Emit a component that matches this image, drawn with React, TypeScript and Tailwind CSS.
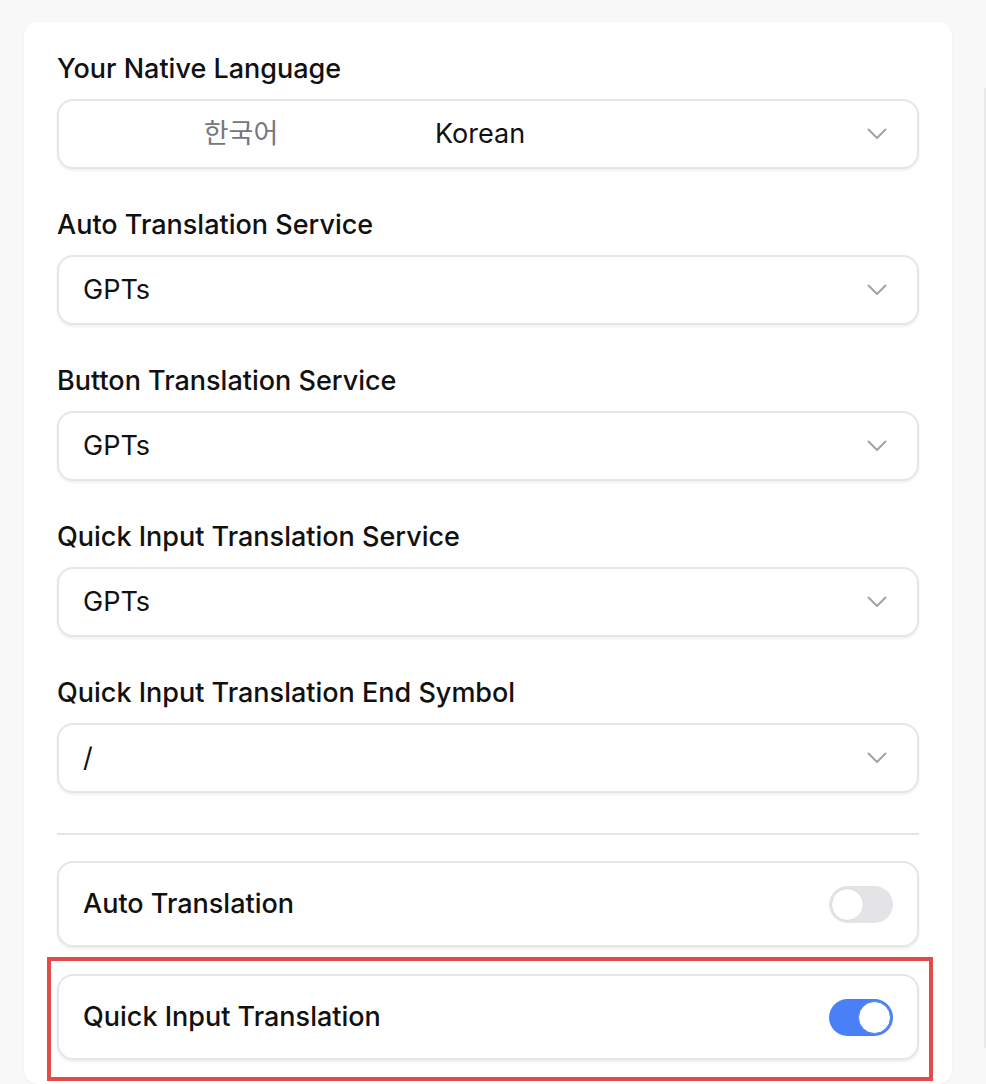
import { useState } from "react";

const font = { fontFamily: "Inter, 'Noto Sans CJK KR', 'Liberation Sans', sans-serif" };

function Chevron() {
    return (
        <svg width="20" height="12" viewBox="0 0 20 12" fill="none" className="shrink-0">
            <polyline points="1.5,1.5 10,10 18.5,1.5" stroke="#a3a3a8" strokeWidth="2" strokeLinecap="round" strokeLinejoin="round" />
        </svg>
    );
}

function SelectBox({ children }: { children: React.ReactNode }) {
    return (
        <div className="flex items-center h-[70px] rounded-[16px] border-2 border-[#e6e6e6] bg-white shadow-[0_2px_3px_rgba(0,0,0,0.06)] pl-[24px] pr-[30px]">
            <div className="flex-1 flex items-center text-[27px] text-[#111]">{children}</div>
            <Chevron />
        </div>
    );
}

function Field({ label, children, first }: { label: string; children: React.ReactNode; first?: boolean }) {
    return (
        <div className={first ? "" : "mt-[40px]"}>
            <div className="text-[27px] leading-[32px] font-medium text-[#111] mb-[14px]">{label}</div>
            <SelectBox>{children}</SelectBox>
        </div>
    );
}

function Toggle({ on, onChange }: { on: boolean; onChange: () => void }) {
    return (
        <button
            onClick={onChange}
            className={
                "relative w-[64px] h-[37px] rounded-full transition-colors " +
                (on ? "bg-[#4a80f7]" : "bg-[#e4e4e7]")
            }
        >
            <span
                className={
                    "absolute top-[2px] w-[33px] h-[33px] rounded-full bg-white transition-all " +
                    (on ? "left-[29px] border border-[#4a80f7]" : "left-[2px] border border-[#d9d9dc]")
                }
            />
        </button>
    );
}

function ToggleCard({ label, on, onChange }: { label: string; on: boolean; onChange: () => void }) {
    return (
        <div className="flex items-center justify-between h-[86px] rounded-[16px] border-2 border-[#e6e6e6] bg-white shadow-[0_2px_3px_rgba(0,0,0,0.07)] pl-[24px] pr-[24px]">
            <span className="text-[27px] font-medium text-[#111]">{label}</span>
            <Toggle on={on} onChange={onChange} />
        </div>
    );
}

export default function App() {
    const [auto, setAuto] = useState(false)
    const [quick, setQuick] = useState(true)

    return (
        <div style={font} className="w-[986px] h-[1084px] overflow-hidden bg-[#f8f8f8] flex">
            <div className="shrink-0 w-[928px] ml-[24px] mt-[22px] bg-white rounded-[14px] shadow-[0_1px_3px_rgba(0,0,0,0.05)] px-[33px] pt-[31px] pb-[60px]">
                <Field label="Your Native Language" first>
                    <span className="w-[316px] text-center text-[#76767c]">한국어</span>
                    <span className="ml-[36px]">Korean</span>
                </Field>
                <Field label="Auto Translation Service">GPTs</Field>
                <Field label="Button Translation Service">GPTs</Field>
                <Field label="Quick Input Translation Service">GPTs</Field>
                <Field label="Quick Input Translation End Symbol">/</Field>

                <div className="mt-[40px] h-[2px] bg-[#e5e5e5]" />

                <div className="mt-[26px]">
                    <ToggleCard label="Auto Translation" on={auto} onChange={() => setAuto(!auto)} />
                </div>
                <div className="relative mt-[27px]">
                    <div className="absolute -left-[10px] -right-[14px] -top-[17px] -bottom-[21px] border-4 border-[#e34a4a] pointer-events-none" />
                    <ToggleCard label="Quick Input Translation" on={quick} onChange={() => setQuick(!quick)} />
                </div>
            </div>
            <div className="shrink-0 ml-[32px] mt-[88px] w-[200px] h-[960px] bg-[#f8f8f8] border-l-2 border-[#e8e8e8]" />
        </div>
    );
}
